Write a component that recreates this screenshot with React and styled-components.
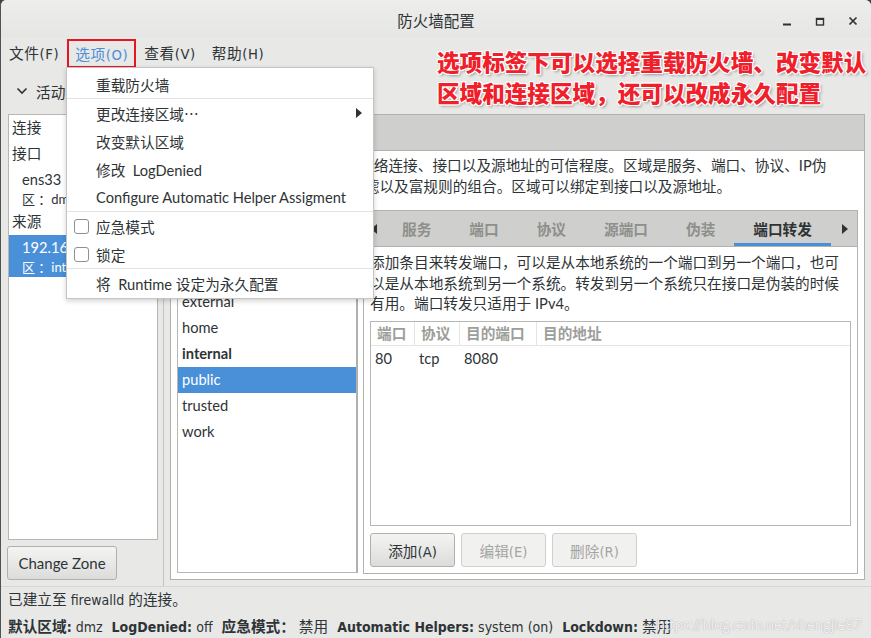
import React from "react";
import styled, { createGlobalStyle } from "styled-components";

const UI = `"Lato", "Noto Sans CJK SC", sans-serif`;
const COND = `"DejaVu Sans Condensed", "DejaVu Sans", "Noto Sans CJK SC", sans-serif`;
const TEXT = "#2e3436";
const BLUE = "#4a90d9";
const LINE = "#b6b6b3";

const GlobalStyle = createGlobalStyle`
  html, body { margin: 0; padding: 0; background: #3a4544; }
  body { font-family: ${UI}; font-size: 14.67px; color: ${TEXT}; }
  * { box-sizing: border-box; }
`;

const Window = styled.div`
  position: relative;
  width: 871px;
  height: 638px;
  background: #e8e8e7;
  border-left: 1px solid #4f5452;
  border-radius: 6px 6px 0 0;
  display: flex;
  flex-direction: column;
  overflow: hidden;
`;

const TitleBar = styled.div`
  flex: none;
  height: 37px;
  display: grid;
  grid-template-columns: 1fr auto 1fr;
  align-items: center;
  background: linear-gradient(#ededec, #e6e6e5);
`;

const Title = styled.div`
  font-size: 15.5px;
  color: ${TEXT};
  padding-top: 3px;
`;

const Controls = styled.div`
  justify-self: end;
  display: flex;
  align-items: center;
  gap: 23px;
  padding: 4px 13px 0 0;
`;

const CtrlIcon = styled.svg`
  width: 10px;
  height: 10px;
  display: block;
`;

const MenuBar = styled.div`
  flex: none;
  height: 31px;
  display: flex;
  align-items: center;
  font-family: ${COND};
  font-size: 14.67px;
  letter-spacing: 0.6px;
`;

const MenuTitle = styled.div`
  height: 29px;
  display: flex;
  align-items: center;
  padding: 0 6px;
  color: ${(p) => (p.$open ? BLUE : TEXT)};
  border: 2px solid ${(p) => (p.$open ? "#e8141f" : "transparent")};
  margin-top: ${(p) => (p.$open ? "1px" : "0")};
`;

const Body = styled.div`
  flex: 1;
  display: flex;
  min-height: 0;
`;

const LeftPane = styled.div`
  flex: none;
  width: 162px;
  display: flex;
  flex-direction: column;
  padding: 0 5px 6px 7px;
`;

const Expander = styled.div`
  flex: none;
  height: 46px;
  display: flex;
  align-items: center;
  gap: 8px;
  padding-left: 8px;
`;

const BindingList = styled.div`
  flex: 1;
  background: #fff;
  border: 1px solid ${LINE};
  overflow: hidden;
`;

const Heading = styled.div`
  height: 26px;
  line-height: 26px;
  padding-left: 3px;
  white-space: nowrap;
`;

const Entry = styled.div`
  padding: 2px 0 2px 13px;
  white-space: nowrap;
  background: ${(p) => (p.$selected ? BLUE : "transparent")};
  color: ${(p) => (p.$selected ? "#fff" : TEXT)};
`;

const EntryMain = styled.div`
  line-height: 22px;
`;

const EntrySub = styled.div`
  line-height: 16px;
  font-size: 13px;
`;

const Button = styled.button`
  flex: none;
  height: 34px;
  padding: 0;
  white-space: nowrap;
  font-family: ${(p) => (p.$cond ? COND : UI)};
  font-size: 14.67px;
  color: ${(p) => (p.disabled ? "#a3a5a2" : TEXT)};
  background: ${(p) =>
    p.disabled ? "#f1f1f0" : "linear-gradient(#f4f4f3, #dcdcda)"};
  border: 1px solid ${(p) => (p.disabled ? "#cfcfcd" : "#b0b0ad")};
  border-radius: 3px;
  width: ${(p) => p.$w || "auto"};
`;

const ChangeZone = styled(Button)`
  margin: 6px 0 0 -1px;
  width: 110px;
  font-size: 15px;
`;

const PaneSep = styled.div`
  flex: none;
  width: 1px;
  background: #c3c3c1;
`;

const RightPane = styled.div`
  flex: 1;
  min-width: 0;
  display: flex;
  flex-direction: column;
  padding: 0 6px 6px 6px;
`;

const ConfigRow = styled.div`
  flex: none;
  height: 46px;
  display: flex;
  align-items: center;
  gap: 8px;
`;

const Combo = styled.div`
  width: 140px;
  height: 32px;
  border: 1px solid ${LINE};
  border-radius: 3px;
  background: linear-gradient(#f4f4f3, #dcdcda);
  display: flex;
  align-items: center;
  padding: 0 10px;
`;

const Notebook = styled.div`
  flex: 1;
  min-width: 0;
  min-height: 0;
  display: flex;
  flex-direction: column;
  border: 1px solid #b1b1ae;
  background: #fff;
`;

const TabHeader = styled.div`
  flex: none;
  height: 36px;
  display: flex;
  align-items: stretch;
  background: #cfcfcd;
  border-bottom: 1px solid #b1b1ae;
`;

const Tabs = styled.div`
  flex: 1;
  min-width: 0;
  display: flex;
  overflow: hidden;
`;

const Tab = styled.div`
  flex: none;
  display: flex;
  align-items: center;
  padding: 3px 19px 0;
  font-weight: 700;
  white-space: nowrap;
  color: ${(p) => (p.$active ? TEXT : "#8d8f8b")};
  border-bottom: 3px solid ${(p) => (p.$active ? BLUE : "transparent")};
`;

const Arrow = styled.div`
  flex: none;
  width: ${(p) => p.$w}px;
  display: flex;
  align-items: center;
  justify-content: center;
`;

const Page = styled.div`
  flex: 1;
  min-height: 0;
  display: flex;
  flex-direction: column;
  padding: 4px 6px 5px 6px;
  background: #fff;
`;

const Description = styled.div`
  flex: none;
  line-height: ${(p) => p.$lh || 21}px;
  white-space: nowrap;
`;

const ContentRow = styled.div`
  flex: 1;
  min-height: 0;
  display: flex;
  gap: 5px;
  margin-top: 13px;
`;

const ZoneList = styled.div`
  flex: none;
  width: 181px;
  border: 1px solid ${LINE};
  border-right: 2px solid #b0b0ad;
  background: #fff;
  margin-bottom: 1px;
`;

const ZoneItem = styled.div`
  height: 26px;
  line-height: 26px;
  padding-left: 4px;
  font-weight: ${(p) => (p.$bold ? 700 : 400)};
  background: ${(p) => (p.$selected ? BLUE : "transparent")};
  color: ${(p) => (p.$selected ? "#fff" : TEXT)};
`;

const InnerNotebook = styled(Notebook)`
  flex: 1;
`;

const InnerPage = styled.div`
  flex: 1;
  min-height: 0;
  display: flex;
  flex-direction: column;
  padding: 6px;
  background: #fff;
`;

const Table = styled.div`
  flex: 1;
  margin-top: 6px;
  border: 1px solid ${LINE};
  display: grid;
  grid-template-columns: 44px 45px 77px 1fr;
  grid-auto-rows: max-content;
`;

const HeadCell = styled.div`
  height: 24px;
  line-height: 24px;
  padding-left: 6px;
  font-weight: 700;
  color: #9c9e9a;
  border-bottom: 1px solid #e4e4e2;
  border-right: ${(p) => (p.$last ? "none" : "1px solid #e4e4e2")};
`;

const Cell = styled.div`
  height: 26px;
  line-height: 26px;
  padding-left: 4px;
`;

const ButtonRow = styled.div`
  flex: none;
  display: flex;
  gap: 6px;
  margin-top: 7px;
`;

const StatusBar = styled.div`
  flex: none;
  height: 52px;
  border-top: 1px solid #d5d5d3;
  padding: 0 7px;
  font-family: ${COND};
  font-size: 14px;
  line-height: 25.5px;
  white-space: nowrap;
`;

const Han = styled.span`
  font-size: 14.67px;
`;

const StatusLine = styled.div`
  display: flex;
  align-items: baseline;
`;

const Pair = styled.span`
  margin-right: 9px;
`;

const Key = styled.b`
  margin-right: 4px;
`;

const Dropdown = styled.div`
  position: absolute;
  left: 65px;
  top: 67px;
  width: 308px;
  background: #fff;
  border: 1px solid #c5c5c3;
  box-shadow: 0 2px 5px rgba(0, 0, 0, 0.18);
  padding: 2px 0 1px;
  z-index: 5;
`;

const DropItem = styled.div`
  height: 28px;
  display: flex;
  align-items: center;
  gap: 7px;
  padding: 0 11px 0 ${(p) => (p.$check ? "7px" : "29px")};
  white-space: nowrap;
`;

const DropSep = styled.div`
  height: 1px;
  background: #e3e3e1;
`;

const Check = styled.span`
  flex: none;
  width: 15px;
  height: 15px;
  border: 1px solid #8d9091;
  border-radius: 3px;
  background: #fff;
`;

const Grow = styled.span`
  flex: 1;
`;

const Annotation = styled.div`
  position: absolute;
  left: 436px;
  top: 46px;
  font-family: "Noto Sans CJK SC", sans-serif;
  font-weight: 900;
  font-size: 22.6px;
  line-height: 31px;
  color: #f0202b;
  white-space: nowrap;
  text-shadow: 1px 0 #fff, -1px 0 #fff, 0 1px #fff, 0 -1px #fff, 1px 1px #fff,
    -1px -1px #fff, 1px -1px #fff, -1px 1px #fff, 2px 2px 3px rgba(0, 0, 0, 0.35);
  z-index: 6;
`;

const Watermark = styled.div`
  position: absolute;
  right: 9px;
  bottom: 3px;
  font-family: "Lato", sans-serif;
  font-size: 14.5px;
  line-height: 20px;
  color: rgba(255, 255, 255, 0.85);
  text-shadow: 0 0 1px rgba(120, 120, 120, 0.7);
  z-index: 6;
`;

const zones = [
  "block",
  "dmz",
  "drop",
  "external",
  "home",
  "internal",
  "public",
  "trusted",
  "work",
];

const innerTabs = ["服务", "端口", "协议", "源端口", "伪装", "端口转发"];

export default function App() {
  return (
    <>
      <GlobalStyle />
      <Window>
        <TitleBar>
          <span />
          <Title>防火墙配置</Title>
          <Controls>
            <CtrlIcon viewBox="0 0 10 10">
              <rect x="1" y="7.5" width="8" height="2" fill={TEXT} />
            </CtrlIcon>
            <CtrlIcon viewBox="0 0 10 10">
              <rect x="1.5" y="2.5" width="7" height="6.5" fill="none" stroke={TEXT} strokeWidth="1.4" />
              <rect x="1" y="2" width="8" height="2" fill={TEXT} />
            </CtrlIcon>
            <CtrlIcon viewBox="0 0 10 10">
              <path d="M1.5 1.5 L8.5 8.5 M8.5 1.5 L1.5 8.5" stroke={TEXT} strokeWidth="1.7" />
            </CtrlIcon>
          </Controls>
        </TitleBar>

        <MenuBar>
          <MenuTitle>文件(F)</MenuTitle>
          <MenuTitle $open>选项(O)</MenuTitle>
          <MenuTitle>查看(V)</MenuTitle>
          <MenuTitle>帮助(H)</MenuTitle>
        </MenuBar>

        <Body>
          <LeftPane>
            <Expander>
              <svg width="12" height="8" viewBox="0 0 12 8">
                <polyline points="1.5,1.5 6,6 10.5,1.5" fill="none" stroke={TEXT} strokeWidth="1.6" />
              </svg>
              <span>活动绑定</span>
            </Expander>
            <BindingList>
              <Heading>连接</Heading>
              <Heading>接口</Heading>
              <Entry>
                <EntryMain>ens33</EntryMain>
                <EntrySub>区 ：dmz （默认）</EntrySub>
              </Entry>
              <Heading>来源</Heading>
              <Entry $selected>
                <EntryMain>192.168.1.0/24</EntryMain>
                <EntrySub>区 ：internal</EntrySub>
              </Entry>
            </BindingList>
            <ChangeZone>Change Zone</ChangeZone>
          </LeftPane>
          <PaneSep />
          <RightPane>
            <ConfigRow>
              <span>配置：</span>
              <Combo>运行时</Combo>
            </ConfigRow>
            <Notebook>
              <TabHeader>
                <Tabs>
                  <Tab $active>区域</Tab>
                  <Tab>服务</Tab>
                </Tabs>
              </TabHeader>
              <Page>
                <Description>
                  <div>FirewallD 区域定义了绑定的网络连接、接口以及源地址的可信程度。区域是服务、端口、协议、IP伪</div>
                  <div>装、端口/报文转发、icmp 过滤以及富规则的组合。区域可以绑定到接口以及源地址。</div>
                </Description>
                <ContentRow>
                  <ZoneList>
                    {zones.map((z) => (
                      <ZoneItem key={z} $bold={z === "internal"} $selected={z === "public"}>
                        {z}
                      </ZoneItem>
                    ))}
                  </ZoneList>
                  <InnerNotebook>
                    <TabHeader>
                      <Arrow $w={19}>
                        <svg width="6" height="10" viewBox="0 0 6 10">
                          <polygon points="6,0 0,5 6,10" fill={TEXT} />
                        </svg>
                      </Arrow>
                      <Tabs>
                        {innerTabs.map((t) => (
                          <Tab key={t} $active={t === "端口转发"}>
                            {t}
                          </Tab>
                        ))}
                      </Tabs>
                      <Arrow $w={24}>
                        <svg width="6" height="10" viewBox="0 0 6 10">
                          <polygon points="0,0 6,5 0,10" fill={TEXT} />
                        </svg>
                      </Arrow>
                    </TabHeader>
                    <InnerPage>
                      <Description $lh={20.5}>
                        <div>添加条目来转发端口，可以是从本地系统的一个端口到另一个端口，也可</div>
                        <div>以是从本地系统到另一个系统。转发到另一个系统只在接口是伪装的时候</div>
                        <div>有用。端口转发只适用于 IPv4。</div>
                      </Description>
                      <Table>
                        <HeadCell>端口</HeadCell>
                        <HeadCell>协议</HeadCell>
                        <HeadCell>目的端口</HeadCell>
                        <HeadCell $last>目的地址</HeadCell>
                        <Cell>80</Cell>
                        <Cell>tcp</Cell>
                        <Cell>8080</Cell>
                        <Cell />
                      </Table>
                      <ButtonRow>
                        <Button $cond $w="85px">添加(A)</Button>
                        <Button $cond $w="85px" disabled>编辑(E)</Button>
                        <Button $cond $w="85px" disabled>删除(R)</Button>
                      </ButtonRow>
                    </InnerPage>
                  </InnerNotebook>
                </ContentRow>
              </Page>
            </Notebook>
          </RightPane>
        </Body>

        <StatusBar>
          <StatusLine>
            <Han>已建立至</Han>&nbsp;firewalld&nbsp;<Han>的连接。</Han>
          </StatusLine>
          <StatusLine>
            <Pair>
              <Key><Han>默认区域</Han>:</Key>dmz
            </Pair>
            <Pair>
              <Key>LogDenied:</Key>off
            </Pair>
            <Pair>
              <Key><Han>应急模式：</Han></Key><Han>禁用</Han>
            </Pair>
            <Pair>
              <Key>Automatic Helpers:</Key>system (on)
            </Pair>
            <Pair>
              <Key>Lockdown:</Key><Han>禁用</Han>
            </Pair>
          </StatusLine>
        </StatusBar>

        <Dropdown>
          <DropItem>重载防火墙</DropItem>
          <DropSep />
          <DropItem>
            <span>更改连接区域⋯</span>
            <Grow />
            <svg width="6" height="10" viewBox="0 0 6 10">
              <polygon points="0,0 6,5 0,10" fill={TEXT} />
            </svg>
          </DropItem>
          <DropItem>改变默认区域</DropItem>
          <DropItem>修改&nbsp; LogDenied</DropItem>
          <DropItem>Configure Automatic Helper Assigment</DropItem>
          <DropSep />
          <DropItem $check>
            <Check />
            <span>应急模式</span>
          </DropItem>
          <DropItem $check>
            <Check />
            <span>锁定</span>
          </DropItem>
          <DropSep />
          <DropItem>将&nbsp; Runtime 设定为永久配置</DropItem>
        </Dropdown>

        <Annotation>
          <div>选项标签下可以选择重载防火墙、改变默认</div>
          <div>区域和连接区域，还可以改成永久配置</div>
        </Annotation>

        <Watermark>https://blog.csdn.net/shengjie87</Watermark>
      </Window>
    </>
  );
}
